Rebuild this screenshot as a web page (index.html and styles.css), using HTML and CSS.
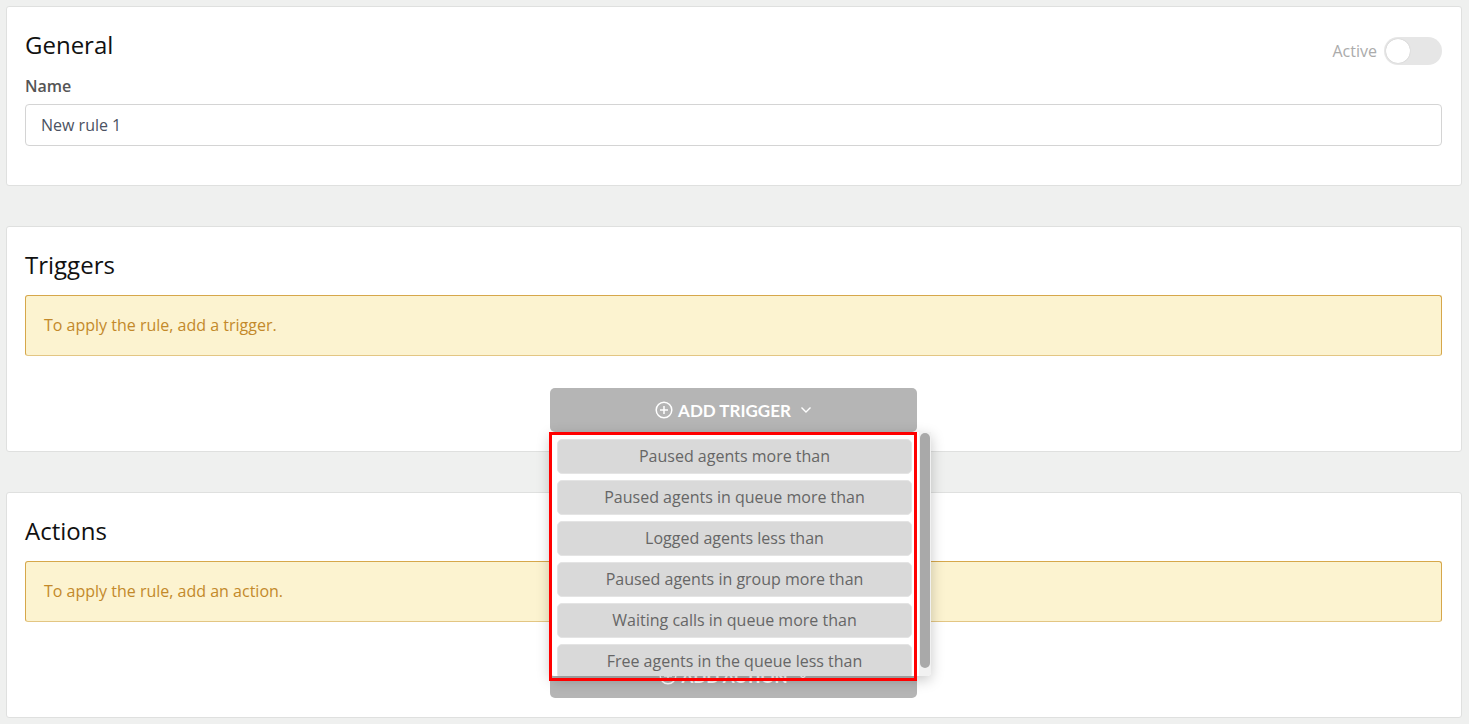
FILE: index.html
```html
<!DOCTYPE html>
<html lang="en">
<head>
  <meta charset="UTF-8" />
  <meta name="viewport" content="width=device-width, initial-scale=1.0"/>
  <title>Rule editor</title>
  <link rel="stylesheet" href="styles.css">
</head>
<body>
  <div class="card">
    <div class="card-head">
      <h2>General</h2>
      <label class="switch-wrap">
        <span class="switch-label">Active</span>
        <span class="switch"><span class="knob"></span></span>
      </label>
    </div>
    <div class="form-group">
      <label class="field-label" for="name">Name</label>
      <input type="text" id="name" class="field" value="New rule 1" />
    </div>
  </div>

  <div class="card">
    <h2>Triggers</h2>
    <div class="alert">To apply the rule, add a trigger.</div>
    <div class="add-wrap">
      <button class="add-btn" type="button">
        <svg class="ico" width="18" height="18" viewBox="0 0 18 18"><circle cx="9" cy="9" r="7.8" fill="none" stroke="#fff" stroke-width="1.5"/><path d="M9 5v8M5 9h8" stroke="#fff" stroke-width="1.5" fill="none"/></svg>
        ADD TRIGGER
        <svg class="chev" width="12" height="8" viewBox="0 0 12 8"><path d="M1.5 1.5l4.5 4.5 4.5-4.5" stroke="#fff" stroke-width="1.4" fill="none"/></svg>
      </button>
      <div class="dropdown">
        <div class="menu">
          <div class="menu-list">
            <div class="menu-item">Paused agents more than</div>
            <div class="menu-item">Paused agents in queue more than</div>
            <div class="menu-item">Logged agents less than</div>
            <div class="menu-item">Paused agents in group more than</div>
            <div class="menu-item">Waiting calls in queue more than</div>
            <div class="menu-item">Free agents in the queue less than</div>
          </div>
          <div class="scroll-track"><div class="scroll-thumb"></div></div>
        </div>
        <div class="highlight"></div>
      </div>
    </div>
  </div>

  <div class="card">
    <h2>Actions</h2>
    <div class="alert">To apply the rule, add an action.</div>
    <div class="add-wrap">
      <button class="add-btn" type="button">
        <svg class="ico" width="18" height="18" viewBox="0 0 18 18"><circle cx="9" cy="9" r="7.8" fill="none" stroke="#fff" stroke-width="1.5"/><path d="M9 5v8M5 9h8" stroke="#fff" stroke-width="1.5" fill="none"/></svg>
        ADD ACTION
        <svg class="chev" width="12" height="8" viewBox="0 0 12 8"><path d="M1.5 1.5l4.5 4.5 4.5-4.5" stroke="#fff" stroke-width="1.4" fill="none"/></svg>
      </button>
    </div>
  </div>
</body>
</html>
```

FILE: styles.css
```css
body {
  font-family: 'Open Sans', 'Noto Sans', sans-serif;
  background: #eff0ef;
  color: #222;
  margin: 0;
  padding: 6px 7px 6px 6px;
}
.card {
  background: #fff;
  border: 1px solid #dfe0df;
  border-radius: 3px;
  padding: 23px 19px 19px 18px;
  margin-bottom: 40px;
}
.card:last-child {
  margin-bottom: 0;
}
h2 {
  font-size: 24px;
  font-weight: 400;
  line-height: 29px;
  margin: 0 0 16px;
  color: #111;
}
.card-head {
  display: flex;
  justify-content: space-between;
  align-items: flex-start;
}
.card-head h2 {
  margin-bottom: 15px;
}
.switch-wrap {
  display: flex;
  align-items: center;
  gap: 7px;
  margin-top: 7px;
}
.switch-label {
  color: #ababab;
  font-size: 16px;
}
.switch {
  width: 58px;
  height: 28px;
  border-radius: 14px;
  background: #e6e6e6;
  position: relative;
}
.knob {
  position: absolute;
  left: 2px;
  top: 2px;
  width: 24px;
  height: 24px;
  border-radius: 50%;
  background: #fff;
  box-shadow: 0 0 1px rgba(0,0,0,0.25);
}
.form-group {
  margin-bottom: 20px;
}
.field-label {
  display: block;
  font-size: 16px;
  font-weight: 600;
  line-height: 24px;
  color: #555;
  margin-bottom: 6px;
}
.field {
  box-sizing: border-box;
  width: 100%;
  height: 42px;
  padding: 0 15px;
  border: 1px solid #d4d4d4;
  border-radius: 4px;
  font-family: inherit;
  font-size: 16px;
  color: #4b5262;
}
.alert {
  background: #fcf3d0;
  border: 1px solid #d6a74a;
  border-bottom-color: #e3c683;
  border-radius: 3px;
  padding: 18px 18px;
  font-size: 16px;
  line-height: 23px;
  color: #c3892a;
}
.add-wrap {
  position: relative;
  width: 367px;
  margin: 32px auto 0;
}
.add-btn {
  width: 100%;
  height: 44px;
  border: none;
  border-radius: 5px;
  background: #b5b5b5;
  color: #fff;
  font-family: Lato, sans-serif;
  font-weight: 700;
  font-size: 17px;
  display: flex;
  align-items: center;
  justify-content: center;
  gap: 5px;
  cursor: pointer;
}
.add-btn .chev {
  margin-left: 4px;
}
.dropdown {
  position: absolute;
  top: 44px;
  left: 0;
  width: 381px;
  z-index: 10;
}
.menu {
  display: flex;
  gap: 7px;
  background: #fff;
  height: 244px;
  padding-left: 7px;
  box-sizing: border-box;
  box-shadow: 0 4px 14px rgba(0,0,0,0.22);
  border-radius: 0 0 4px 4px;
  overflow: hidden;
}
.menu-list {
  flex: 1;
  padding-top: 7px;
  overflow: hidden;
}
.menu-item {
  background: #d9d9d9;
  border: 1px solid #e4e4e4;
  border-radius: 5px;
  height: 35px;
  box-sizing: border-box;
  line-height: 33px;
  margin-bottom: 6px;
  text-align: center;
  font-size: 16px;
  color: #666;
  cursor: pointer;
}
.scroll-track {
  width: 12px;
  background: #f1f1f1;
  padding: 1px 1px 8px;
  box-sizing: border-box;
}
.scroll-thumb {
  height: 100%;
  background: #a9a9a9;
  border-radius: 5px;
}
.highlight {
  position: absolute;
  left: -1px;
  top: 0;
  width: 368px;
  height: 249px;
  border: 3px solid #f00;
  box-sizing: border-box;
  pointer-events: none;
}
```
